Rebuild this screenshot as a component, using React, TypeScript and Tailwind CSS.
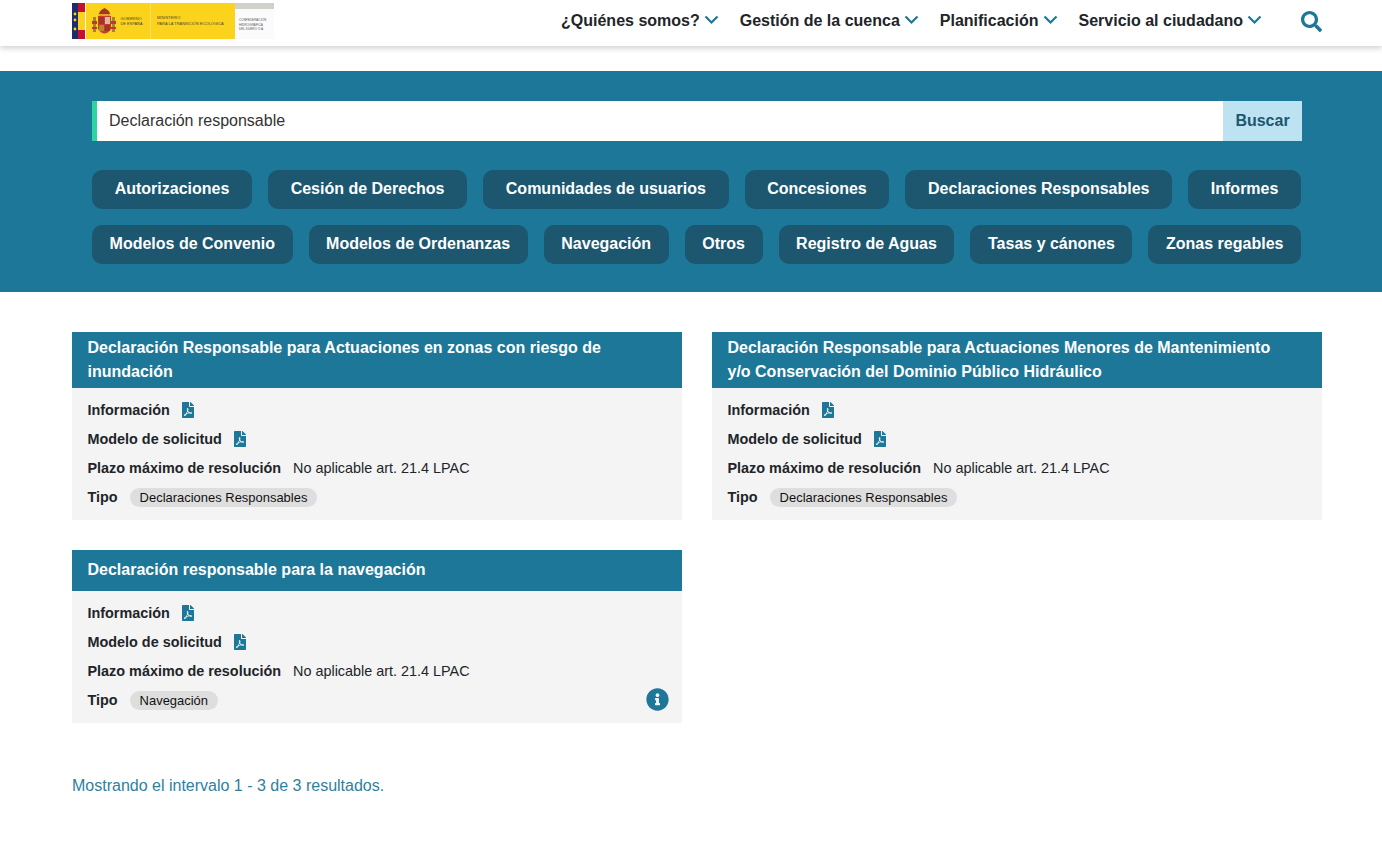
import { FaFilePdf, FaInfoCircle, FaSearch } from "react-icons/fa";

const menu = ["¿Quiénes somos?", "Gestión de la cuenca", "Planificación", "Servicio al ciudadano"];

const chips = [
  "Autorizaciones",
  "Cesión de Derechos",
  "Comunidades de usuarios",
  "Concesiones",
  "Declaraciones Responsables",
  "Informes",
  "Modelos de Convenio",
  "Modelos de Ordenanzas",
  "Navegación",
  "Otros",
  "Registro de Aguas",
  "Tasas y cánones",
  "Zonas regables",
];

function Logo() {
  const font = "'Liberation Sans', sans-serif";
  return (
    <svg width="203" height="36" viewBox="0 0 203 36" className="mt-[3px] block">
      <rect x="14" y="0" width="149" height="36" fill="#fbd31c" />
      <rect x="0" y="0" width="6" height="36" fill="#1d2d6b" />
      <circle cx="3" cy="11" r="1.4" fill="#fbd31c" />
      <circle cx="3" cy="17" r="1.4" fill="#fbd31c" />
      <circle cx="3" cy="26" r="1.4" fill="#fbd31c" />
      <rect x="6" y="0" width="7" height="9" fill="#c8102e" />
      <rect x="6" y="9" width="7" height="18" fill="#fbd31c" />
      <rect x="6" y="27" width="7" height="9" fill="#c8102e" />
      {/* coat of arms */}
      <rect x="21" y="14" width="3" height="15" fill="#a9803f" />
      <rect x="40" y="14" width="3" height="15" fill="#a9803f" />
      <rect x="20" y="18" width="5" height="3" fill="#c0392b" />
      <rect x="39" y="18" width="5" height="3" fill="#c0392b" />
      <rect x="20" y="24" width="5" height="2" fill="#c0392b" />
      <rect x="39" y="24" width="5" height="2" fill="#c0392b" />
      <path d="M26 13 L39 13 L39 26 Q32.5 35 26 26 Z" fill="#c2402a" />
      <rect x="33" y="14" width="5" height="7" fill="#e2b5a8" />
      <rect x="27" y="14" width="5" height="7" fill="#a8322a" />
      <rect x="27" y="22" width="5" height="6" fill="#b8862c" />
      <rect x="33" y="22" width="5" height="6" fill="#a8322a" />
      <path d="M27 13 Q26 8 32.5 5 Q39 8 38 13 Z" fill="#a8322a" />
      <rect x="27" y="11" width="11" height="2" fill="#d9a52c" />
      <text x="48.5" y="17" fontSize="3.9" fill="#4a4632" fontFamily={font}>GOBIERNO</text>
      <text x="48.5" y="21.5" fontSize="3.9" fill="#4a4632" fontFamily={font}>DE ESPAÑA</text>
      <rect x="78" y="0" width="1" height="36" fill="#f5df6a" />
      <text x="85" y="16" fontSize="4" fill="#4a4632" fontFamily={font}>MINISTERIO</text>
      <text x="85" y="21.5" fontSize="4" fill="#4a4632" fontFamily={font}>PARA LA TRANSICIÓN ECOLÓGICA</text>
      <rect x="163" y="0" width="39" height="6" fill="#d2d0cd" />
      <rect x="163" y="6" width="39" height="30" fill="#fbfbfb" />
      <text x="167" y="18" fontSize="3.1" fill="#55555a" fontFamily={font}>CONFEDERACIÓN</text>
      <text x="167" y="22.5" fontSize="3.1" fill="#55555a" fontFamily={font}>HIDROGRÁFICA</text>
      <text x="167" y="27" fontSize="3.1" fill="#55555a" fontFamily={font}>DEL DUERO O.A.</text>
    </svg>
  );
}

function Chevron() {
  return (
    <svg width="15" height="10" viewBox="0 0 15 10" fill="none" className="mb-[2px]">
      <polyline points="1.5,1.5 7.5,7.5 13.5,1.5" stroke="#1c7798" strokeWidth="2.2" />
    </svg>
  );
}

function Row({ label, children }: { label: string; children: React.ReactNode }) {
  return (
    <div className="flex h-[29px] items-center text-[14.4px] text-[#212529]">
      <span className="mr-3 font-bold">{label}</span>
      {children}
    </div>
  );
}

function PdfIcon() {
  return <FaFilePdf className="-mt-[2px] -ml-[2px] text-base text-[#1c7798]" />;
}

function Card({ title, tipo, info, single }: { title: string; tipo: string; info?: boolean; single?: boolean }) {
  return (
    <article>
      {single ? (
        <h3 className="bg-[#1c7798] px-[15.5px] pt-2 pb-[9px] text-base leading-[24px] font-bold text-white">{title}</h3>
      ) : (
        <h3 className="bg-[#1c7798] py-1 pr-[30px] pl-[15.5px] text-base leading-[24px] font-bold text-white">{title}</h3>
      )}
      <div className="relative h-[132px] bg-[#f4f4f4] px-[15.5px] pt-2">
        <Row label="Información">
          <PdfIcon />
        </Row>
        <Row label="Modelo de solicitud">
          <PdfIcon />
        </Row>
        <Row label="Plazo máximo de resolución">No aplicable art. 21.4 LPAC</Row>
        <Row label="Tipo">
          <span className="rounded-full bg-[#dedede] px-2.5 py-[2px] text-[12.96px] leading-[15px] text-[#111]">{tipo}</span>
        </Row>
        {info && <FaInfoCircle className="absolute right-[13px] bottom-[12px] text-[23px] text-[#1c7798]" />}
      </div>
    </article>
  );
}

export default function App() {
  return (
    <div className="min-h-[857px] bg-white font-['Liberation_Sans',Arial,sans-serif] text-[#212529]">
      <header className="flex h-[46px] items-start justify-between bg-white pr-[60px] pl-[72px] shadow-[0_2px_6px_rgba(0,0,0,0.2)]">
        <Logo />
        <nav className="flex h-[42px] items-center">
          {menu.map((m) => (
            <a key={m} className="mr-[21px] flex items-center gap-[4px] text-base font-bold whitespace-nowrap text-[#212529]">
              {m}
              <Chevron />
            </a>
          ))}
          <FaSearch className="ml-[18px] text-[21px] text-[#1c7798]" />
        </nav>
      </header>

      <section className="mt-[25px] h-[221px] bg-[#1c7798] px-[92px] pt-[30px]">
        <div className="flex h-10 w-[1210px]">
          <div className="flex flex-1 items-center border-l-[5px] border-[#2bd4a0] bg-white pl-3 text-base text-[#333]">
            Declaración responsable
          </div>
          <button className="w-[79px] bg-[#bde3f2] text-base font-bold text-[#1c576f]">Buscar</button>
        </div>
        <div className="mt-[29px] flex w-[1209px] flex-wrap gap-4">
          {chips.map((c) => (
            <a
              key={c}
              className="flex h-[39px] grow items-center justify-center rounded-[10px] bg-[#1c576f] px-[17.5px] pb-[2px] text-base font-bold whitespace-nowrap text-white"
            >
              {c}
            </a>
          ))}
        </div>
      </section>

      <main className="grid grid-cols-2 gap-[30px] pt-10 pr-[60px] pl-[72px]">
        <Card
          title="Declaración Responsable para Actuaciones en zonas con riesgo de inundación"
          tipo="Declaraciones Responsables"
        />
        <Card
          title="Declaración Responsable para Actuaciones Menores de Mantenimiento y/o Conservación del Dominio Público Hidráulico"
          tipo="Declaraciones Responsables"
        />
        <Card title="Declaración responsable para la navegación" tipo="Navegación" info single />
      </main>

      <p className="mt-[51px] pl-[72px] text-base text-[#2f7f9e]">Mostrando el intervalo 1 - 3 de 3 resultados.</p>
    </div>
  );
}
